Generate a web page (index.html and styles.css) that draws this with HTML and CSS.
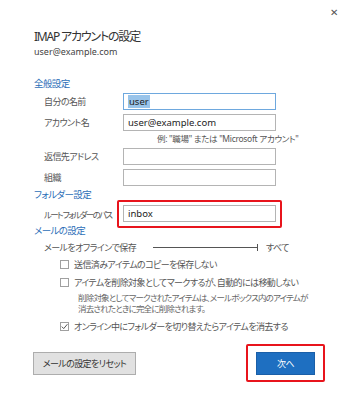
FILE: index.html
```
<!DOCTYPE html>
<html>
  <head>
    <meta charset="utf-8" />
    <title>IMAP アカウントの設定</title>
    <link rel="stylesheet" href="styles.css">
  </head>

  <body>
    <div class="dialog">
      <div class="topbar">
        <span class="close">&#x2715;</span>
      </div>

      <!-- header -->
      <div class="title">IMAP アカウントの設定</div>
      <div class="account">user@example.com</div>

      <!-- 全般設定 -->
      <div class="heading first">全般設定</div>
      <div class="row">
        <span class="label">自分の名前</span>
        <span class="field focused"><span class="sel">user</span></span>
      </div>
      <div class="row">
        <span class="label">アカウント名</span>
        <span class="field">user@example.com</span>
      </div>
      <div class="hint">例: "職場" または "Microsoft アカウント"</div>
      <div class="row">
        <span class="label">返信先アドレス</span>
        <span class="field"></span>
      </div>
      <div class="row">
        <span class="label">組織</span>
        <span class="field"></span>
      </div>

      <!-- フォルダー設定 -->
      <div class="heading">フォルダー設定</div>
      <div class="row folder">
        <span class="label tight">ルート フォルダーのパス</span>
        <span class="field marked">inbox</span>
      </div>

      <!-- メールの設定 -->
      <div class="heading">メールの設定</div>
      <div class="offline">
        <span class="label">メールをオフラインで保存</span>
        <span class="slider"></span>
        <span class="slider-value">すべて</span>
      </div>
      <div class="check first-check">
        <span class="box"></span>
        <span>送信済みアイテムのコピーを保存しない</span>
      </div>
      <div class="check">
        <span class="box"></span>
        <span>アイテムを削除対象としてマークするが、自動的には移動しない</span>
      </div>
      <div class="desc">
        削除対象としてマークされたアイテムは、メールボックス内のアイテムが<br />
        消去されたときに完全に削除されます。
      </div>
      <div class="check last-check">
        <span class="box checked">
          <svg width="9" height="9" viewBox="0 0 9 9"><path d="M1.8 4.6 L3.7 6.6 L7.4 2.2" fill="none" stroke="#555" stroke-width="1"/></svg>
        </span>
        <span>オンライン中にフォルダーを切り替えたらアイテムを消去する</span>
      </div>

      <!-- buttons -->
      <div class="buttons">
        <button class="btn reset">メールの設定をリセット</button>
        <button class="btn next marked">次へ</button>
      </div>
    </div>
  </body>
</html>
```

FILE: styles.css
```
body {
  margin: 0;
  padding: 0;
  background: #ffffff;
  font-family: "Noto Sans", "Noto Sans CJK JP", sans-serif;
  font-feature-settings: "palt";
  color: #444;
  font-size: 9px;
  letter-spacing: -0.6px;
}

.dialog {
  width: 350px;
  height: 410px;
  padding-left: 34px;
  box-sizing: border-box;
}

.topbar {
  height: 24px;
  display: flex;
  justify-content: flex-end;
  align-items: center;
  padding-right: 13px;
}

.close {
  font-size: 10px;
  color: #555;
  line-height: 1;
}

.title {
  margin-top: 5px;
  font-size: 12px;
  letter-spacing: -1.2px;
  line-height: 16px;
  color: #333;
}

.account {
  font-size: 9px;
  letter-spacing: 0;
  line-height: 14px;
  color: #444;
}

.heading {
  margin-top: 2px;
  font-size: 9.5px;
  line-height: 14px;
  color: #2d6fb8;
}

.heading.first {
  margin-top: 18px;
}

.row {
  display: flex;
  align-items: center;
  height: 17px;
  margin-top: 4px;
}

.heading + .row {
  margin-top: 2px;
}

.heading + .row.folder {
  margin-top: 3px;
}

.label {
  width: 89px;
  padding-left: 10px;
  box-sizing: border-box;
  flex: none;
  white-space: nowrap;
  color: #555;
}

.label.tight {
  font-size: 8.5px;
  letter-spacing: -1.6px;
  overflow: hidden;
}

.field {
  position: relative;
  width: 153px;
  height: 17px;
  box-sizing: border-box;
  border: 1px solid #b4b4b4;
  padding: 0 4px;
  font-size: 9.5px;
  letter-spacing: 0;
  line-height: 15px;
  color: #222;
}

.field.focused {
  border-color: #6ea8de;
}

.sel {
  background: #99c4ea;
  padding: 0 1px;
}

.hint {
  margin: 2px 0 0 123px;
  line-height: 12px;
  font-size: 8.5px;
  letter-spacing: -0.3px;
  color: #555;
  white-space: nowrap;
}

.hint + .row {
  margin-top: 3px;
}

/* red annotation frames */
.marked {
  position: relative;
}

.field.marked::after {
  content: "";
  position: absolute;
  left: -7px;
  right: -7px;
  top: -6px;
  bottom: -7px;
  border: 2px solid #e8141c;
  border-radius: 2px;
}

.offline {
  display: flex;
  align-items: center;
  height: 14px;
  margin-top: 2px;
}

.offline .label {
  width: 119px;
}

.slider {
  position: relative;
  width: 105px;
  height: 1px;
  background: #555;
}

.slider::after {
  content: "";
  position: absolute;
  right: 0;
  top: -3px;
  width: 1px;
  height: 7px;
  background: #555;
}

.slider-value {
  margin-left: 8px;
  color: #555;
}

.check {
  display: flex;
  align-items: center;
  height: 14px;
  margin-top: 4px;
  padding-left: 26px;
  color: #555;
  white-space: nowrap;
}

.check.first-check {
  margin-top: 3px;
}

.check.last-check {
  margin-top: 5px;
}

.box {
  width: 9px;
  height: 9px;
  box-sizing: border-box;
  border: 1px solid #a0a0a0;
  background: #fff;
  margin-right: 5px;
  flex: none;
  display: flex;
}

.box.checked svg {
  margin: -1px;
}

.desc {
  margin-top: 4px;
  padding-left: 44px;
  font-size: 8.5px;
  letter-spacing: -0.8px;
  line-height: 10.5px;
  color: #666;
  white-space: nowrap;
}

.buttons {
  display: flex;
  justify-content: space-between;
  align-items: center;
  margin-top: 19px;
  margin-left: -1px;
  padding-right: 35px;
}

.btn {
  height: 23px;
  font-family: inherit;
  font-feature-settings: "palt";
  font-size: 9px;
  letter-spacing: -0.6px;
  border-radius: 0;
  padding: 0;
  cursor: pointer;
}

.btn.reset {
  width: 103px;
  background: #e1e1e1;
  border: 1px solid #adadad;
  color: #333;
}

.btn.next {
  width: 59px;
  background: #1e6fc1;
  border: 1px solid #1a5fa8;
  color: #fff;
}

.btn.next::after {
  content: "";
  position: absolute;
  left: -11px;
  right: -11px;
  top: -9px;
  bottom: -8px;
  border: 2px solid #e8141c;
  border-radius: 2px;
}
```
